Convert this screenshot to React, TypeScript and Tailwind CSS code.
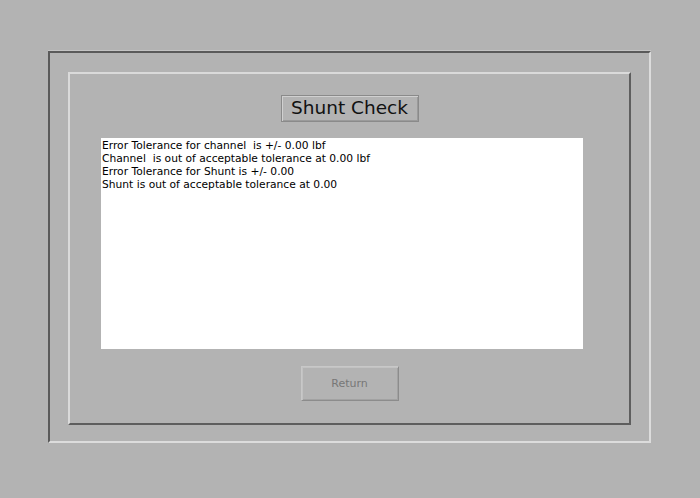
export default function App() {
  const lines = [
    "Error Tolerance for channel  is +/- 0.00 lbf",
    "Channel  is out of acceptable tolerance at 0.00 lbf",
    "Error Tolerance for Shunt is +/- 0.00",
    "Shunt is out of acceptable tolerance at 0.00",
  ];

  return (
    <div className="w-[700px] h-[498px] bg-[#b3b3b3] pt-[50px] pl-[48px] overflow-hidden">
      {/* outer sunken frame */}
      <div className="w-[603px] h-[393px] border-t border-t-[#c4c4c4] ">
        <div className="w-full h-full border-l-2 border-t-2 border-l-[#5a5a5a] border-t-[#5a5a5a] border-r-2 border-b-2 border-r-[#dcdcdc] border-b-[#dcdcdc] pl-[18px] pt-[19px]">
          {/* inner raised frame */}
          <div className="w-[563px] h-[353px] border-l-2 border-t-2 border-l-[#dadada] border-t-[#dadada] border-r-2 border-b-2 border-r-[#5e5e5e] border-b-[#5e5e5e] flex flex-col">
            <div className="flex justify-center mt-[21px]">
              <div className="w-[138px] h-[27px] border border-[#8a8a8a] flex items-center justify-center shadow-[inset_1px_1px_0_#d0d0d0,inset_-1px_-1px_0_#9a9a9a]">
                <span className="text-[18.5px] text-[#111] font-['DejaVu_Sans',sans-serif] leading-none">
                  Shunt Check
                </span>
              </div>
            </div>
            <div className="ml-[31px] mt-[16px] w-[482px] h-[211px] bg-white pl-[1px] pt-[1px] font-['DejaVu_Sans',sans-serif] text-[10.7px] leading-[13px] text-black">
              {lines.map((l) => (
                <div key={l} className="whitespace-pre">{l}</div>
              ))}
            </div>
            <div className="flex justify-center mt-[17px]">
              <button className="w-[98px] h-[35px] bg-[#b3b3b3] border border-[#c8c8c8] border-r-[#8c8c8c] border-b-[#8c8c8c] shadow-[inset_1px_1px_0_#c2c2c2,inset_-1px_-1px_0_#a2a2a2] pt-[2px] text-[11px] text-[#777] font-['DejaVu_Sans',sans-serif]">
                Return
              </button>
            </div>
          </div>
        </div>
      </div>
    </div>
  );
}
